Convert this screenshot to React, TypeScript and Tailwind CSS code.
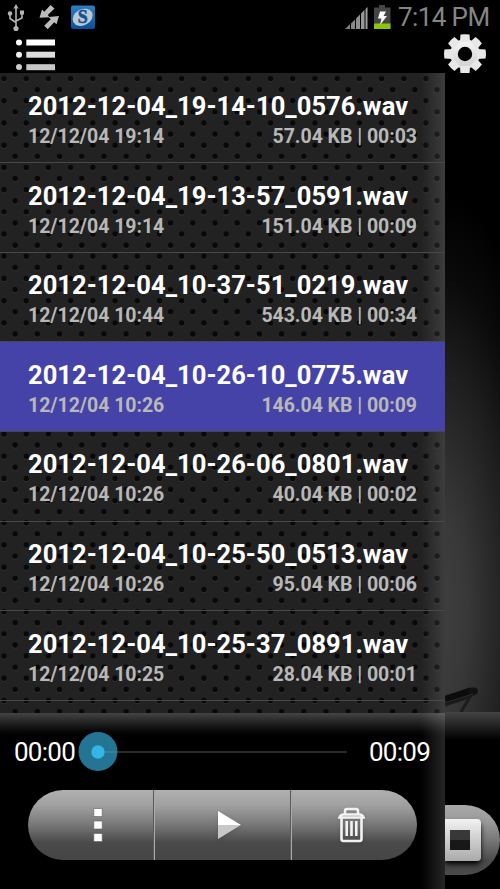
const files = [
  { name: '2012-12-04_19-14-10_0576.wav', date: '12/12/04 19:14', info: '57.04 KB | 00:03' },
  { name: '2012-12-04_19-13-57_0591.wav', date: '12/12/04 19:14', info: '151.04 KB | 00:09' },
  { name: '2012-12-04_10-37-51_0219.wav', date: '12/12/04 10:44', info: '543.04 KB | 00:34' },
  { name: '2012-12-04_10-26-10_0775.wav', date: '12/12/04 10:26', info: '146.04 KB | 00:09', selected: true },
  { name: '2012-12-04_10-26-06_0801.wav', date: '12/12/04 10:26', info: '40.04 KB | 00:02' },
  { name: '2012-12-04_10-25-50_0513.wav', date: '12/12/04 10:26', info: '95.04 KB | 00:06' },
  { name: '2012-12-04_10-25-37_0891.wav', date: '12/12/04 10:25', info: '28.04 KB | 00:01' },
];

// Perforated metal: staggered rows of holes, half a pitch apart.
const PITCH = 22.21;
const holes: { x: number; y: number }[] = [];
for (let row = 0; row < 58; row++) {
  for (let col = 0; col < 21; col++) {
    holes.push({ x: 4 + col * PITCH + (row % 2 ? PITCH / 2 : 0), y: 5.6 + (row * PITCH) / 2 });
  }
}

function StatusBar() {
  return (
    <div className="flex h-[34px] items-center justify-between">
      <svg width="100" height="34" viewBox="0 0 100 34">
        <g stroke="#b4b4b4" fill="#b4b4b4" strokeWidth="1.6">
          <path d="M16 8v20M10 14v4.500l6 4M22 13v5l-6 3" fill="none" />
          <path d="M16 4l2.500 4.500h-5z" strokeWidth="0" />
          <circle cx="10" cy="13.500" r="2.200" strokeWidth="0" />
          <rect x="20" y="10.500" width="4" height="4" strokeWidth="0" />
          <circle cx="16" cy="28.500" r="2.600" strokeWidth="0" />
        </g>
        <path d="M39.500 17.800L42 9.500l2.300 2.300L50.500 5l4 3.500-6.700 6.500 1.700 2.300z" fill="#bcbcbc" />
        <path d="M59 16l-2.500 8.300-2.300-2.100-6.500 7-3.500-3.400 6.500-6.500-2-2.200z" fill="#bcbcbc" />
        <defs>
          <linearGradient id="app" x2="0" y2="1">
            <stop stopColor="#2c7fc4" />
            <stop offset="1" stopColor="#0c4f98" />
          </linearGradient>
        </defs>
        <rect x="71" y="5.500" width="24" height="23.500" rx="2" fill="url(#app)" />
        <ellipse cx="82.700" cy="17.300" rx="10.500" ry="8" fill="#b9c9d4" transform="rotate(-28 82.700 17.300)" />
        <text x="82.700" y="23" textAnchor="middle" fontSize="18" fontWeight="700" fontFamily="Liberation Serif, serif" fill="#174f91" stroke="#174f91" strokeWidth=".5">S</text>
      </svg>
      <div className="flex items-center">
        <svg width="50" height="34" viewBox="345 0 50 34">
          <defs>
            <linearGradient id="sig">
              <stop stopColor="#777" />
              <stop offset="1" stopColor="#a0a0a0" />
            </linearGradient>
          </defs>
          <path d="M345 29l5-5v5zM351 23.500l4-4V29h-4zM356 18.500l4-4V29h-4zM361 13.500l3.500-3.500v19H361zM365.500 9l2-2v22h-2z" fill="url(#sig)" />
          <path d="M379 5h6v2.500h5.500V29H374V7.500h5z" fill="#454545" />
          <path d="M374 23.500h16.500V29H374z" fill="#8cc40c" />
          <path d="M380 11.500h6l-2.500 4.500h3.500l-7 9 1.500-6.500H378z" fill="#fff" />
        </svg>
        <span className="w-[105px] pl-[3px] text-[26px] leading-[34px] tracking-[-0.600px] whitespace-nowrap text-[#858585]">7:14 PM</span>
      </div>
    </div>
  );
}

function Toolbar() {
  return (
    <div className="flex h-[39px] items-start justify-between pr-[13px] pl-4">
      <svg width="40" height="39" viewBox="16 34 40 39">
        <circle cx="19" cy="42.500" r="3" fill="#fff" />
        <circle cx="19" cy="54.700" r="3" fill="#eee" />
        <circle cx="19" cy="67" r="3" fill="#ccc" />
        <rect x="26.300" y="39.500" width="28.700" height="6" fill="#fff" />
        <rect x="26.300" y="51.700" width="28.700" height="6" fill="#dedede" />
        <rect x="26.300" y="64.200" width="28.700" height="6" fill="#c6c6c6" />
      </svg>
      <svg width="44" height="40" viewBox="-22 -20 44 40">
        <defs>
          <linearGradient id="gear" gradientUnits="userSpaceOnUse" x1="0" y1="-20" x2="0" y2="20">
            <stop stopColor="#fff" />
            <stop offset="1" stopColor="#c8c8c8" />
          </linearGradient>
        </defs>
        <circle r="11" fill="none" stroke="url(#gear)" strokeWidth="7.600" />
        <g fill="#e8e8e8">
          {[0, 45, 90, 135, 180, 225, 270, 315].map((a) => (
            <path
              key={a}
              d={a % 180 === 90 ? 'M-5-12l.5-8.600q4.500-.8 9 0l.5 8.600z' : 'M-5-12l.5-7.400q4.500-.8 9 0l.5 7.400z'}
              transform={`rotate(${a})`}
            />
          ))}
        </g>
      </svg>
    </div>
  );
}

function FileList() {
  return (
    <div className="relative h-[640px] overflow-hidden bg-[#222]">
      <svg className="absolute inset-0" width="445" height="640">
        {holes.map((h, i) => (
          <g key={i}>
            <circle cx={h.x} cy={h.y + 0.8} r="3" fill="#2e2e2e" />
            <circle cx={h.x} cy={h.y} r="2.700" fill="#080808" />
          </g>
        ))}
      </svg>
      <div className="absolute inset-y-0 right-0 w-6 bg-gradient-to-r from-transparent to-white/12" />
      <div className="relative pt-[0.600px]">
        {files.map((f) => (
          <div
            key={f.name}
            className={`h-[89.600px] border-b border-[#484848] pt-[17.400px] pr-7 pl-7 font-bold ${f.selected ? 'bg-[#4643a8]' : ''}`}
          >
            <div className="text-[25.500px] leading-[30px] tracking-[0.050px] whitespace-nowrap text-white">{f.name}</div>
            <div className="flex justify-between text-[19.500px] leading-[32px] tracking-[-0.030px] text-[#b8b8b8]">
              <span>{f.date}</span>
              <span>{f.info}</span>
            </div>
          </div>
        ))}
      </div>
    </div>
  );
}

function Player() {
  return (
    <div className="relative h-[176px] bg-black">
      <div className="absolute inset-x-0 top-0 h-[28px] bg-gradient-to-b from-[#444] to-black" />
      <div className="absolute inset-y-0 right-0 w-6 bg-gradient-to-r from-transparent to-white/15" />
      <div className="relative flex h-[77px] items-center pl-[14px] text-[26px] tracking-[-0.750px] text-white">
        <span className="w-[64px] pt-[2px]">00:00</span>
        <svg width="269" height="40" viewBox="78 731 269 40">
          <path d="M98 751H347" stroke="#2a2a2a" strokeWidth="2" />
          <circle cx="98" cy="750.500" r="19.500" fill="#247493" />
          <path d="M98 751h19" stroke="#397f9a" strokeWidth="2" />
          <circle cx="98" cy="751" r="6.700" fill="#33b5e5" />
        </svg>
        <span className="ml-[22px] pt-[2px]">00:09</span>
      </div>
      <div className="relative ml-[28px] flex h-[70px] w-[389px] overflow-hidden rounded-[35px] bg-[linear-gradient(#b0b0b0_0%,#a0a0a0_22%,#777_50%,#4a4a4a_75%,#454545_100%)]">
        <div className="flex w-[126px] items-center justify-center border-r border-[#5a5a5a] pl-[14px]">
          <svg width="12" height="36" viewBox="-1 0 12 36" fill="#fff" stroke="#5558" strokeWidth="1">
            <path d="M.8 1.500h8.400v8H.8zM.8 14h8.400v8H.8zM.8 26.500h8.400v8H.8z" />
          </svg>
        </div>
        <div className="flex w-[137px] items-center justify-center border-r border-l border-r-[#5a5a5a] border-l-[#aaa] pl-[14px]">
          <svg width="26" height="30" viewBox="0 0 26 30" className="drop-shadow">
            <path d="M1 1l23 14H1z" fill="#fff" />
            <path d="M1 29l23-14H1z" fill="#c8c8c8" />
          </svg>
        </div>
        <div className="flex flex-1 items-center border-l border-[#aaa] pl-[46px]">
          <svg width="28" height="36" viewBox="0 0 28 36" fill="none" stroke="#f2f2f2" strokeWidth="2.600" className="drop-shadow">
            <path d="M7 8V4q0-2 2-2h9q2 0 2 2v4M1.500 10.500q1-3 4-3h16q3 0 4 3z" />
            <path d="M3.500 11v21q0 2 2 2h16q2 0 2-2V11" />
            <path d="M8.700 14v15M13.500 14v15M18.300 14v15" />
          </svg>
        </div>
      </div>
    </div>
  );
}

function RecorderEdge() {
  return (
    <div className="flex w-[55px] flex-col bg-black">
      <div className="relative h-[639px] bg-[radial-gradient(ellipse_130px_420px_at_-10px_84%,#404040_0%,#383838_25%,#1e1e1e_58%,#0a0a0a_80%,#000_100%)]">
        <svg className="absolute bottom-0 left-0" width="55" height="30" viewBox="445 682 55 30">
          <path d="M445 705l27-9M471 695l-10 17" stroke="#1c1c1c" strokeWidth="3" />
          <path d="M445 700l27-9" stroke="#0c0c0c" strokeWidth="8" />
          <ellipse cx="473" cy="691.500" rx="5" ry="4" fill="#111" transform="rotate(-15 473 691)" />
          <path d="M445 703l28-9" stroke="#2b2b2b" strokeWidth="1.200" />
        </svg>
      </div>
      <div className="h-[93px] bg-[linear-gradient(#444,#000_28px)]" />
      <div className="-ml-px flex h-[70px] items-center rounded-r-[35px] bg-[linear-gradient(#a8a8a8_0%,#999_25%,#777_50%,#4a4a4a_80%)]">
        <div className="flex h-[42px] w-[37px] items-center rounded-r-[4px] bg-gradient-to-b from-[#f2f2f2] to-[#aaa] pl-[6px] shadow-md shadow-black">
          <div className="h-[20px] w-[20px] bg-[linear-gradient(#383838_50%,#181818_50%)]" />
        </div>
      </div>
    </div>
  );
}

export default function App() {
  return (
    <div className="h-[889px] w-[500px] overflow-hidden bg-black font-[Roboto,sans-serif]">
      <StatusBar />
      <Toolbar />
      <div className="flex h-[816px]">
        <div className="w-[445px]">
          <FileList />
          <Player />
        </div>
        <RecorderEdge />
      </div>
    </div>
  );
}
